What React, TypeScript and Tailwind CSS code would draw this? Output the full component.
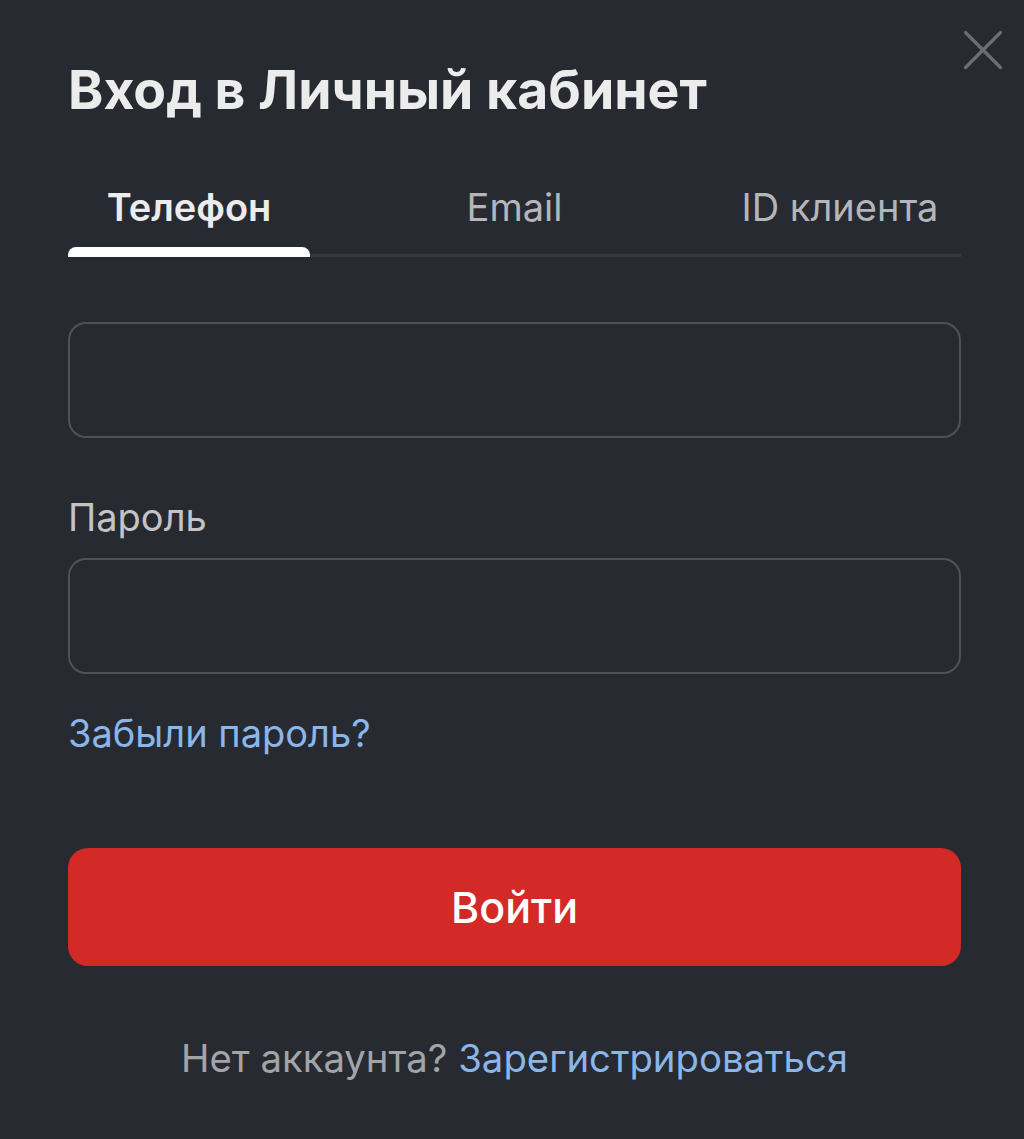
import { X } from "lucide-react";

const tabs = ["Телефон", "Email", "ID клиента"];

function LoginModal() {
	const active = 0;
	return (
		<div className="relative min-h-[1139px] w-full bg-[#272a31] pl-[68px] pr-[63px] pt-[58px] font-['Inter',sans-serif]">
			<button className="absolute right-[6px] top-[15px] text-[#6b6e74]">
				<X className="h-[70px] w-[70px]" strokeWidth={1.1} />
			</button>
			<h1 className="text-[53.5px] font-bold leading-[64px] text-[#ececec]">Вход в Личный кабинет</h1>

			<div className="relative mt-[62px]">
				<div className="flex justify-between">
					{tabs.map((tab, index) => (
						<button
							key={tab}
							className={`relative w-[242px] pb-[27px] text-[38px] leading-[46px] ${
								index === active ? "font-semibold text-[#ececec]" : "text-[#b4b6ba]"
							}`}
						>
							{tab}
							{index === active && (
								<span className="absolute bottom-0 left-0 z-10 h-[10px] w-full rounded-t-[8px] bg-white" />
							)}
						</button>
					))}
				</div>
				<div className="-mt-[3px] h-[3px] w-full bg-[#353841]" />
			</div>

			<div className="mt-[65px] h-[116px] rounded-[18px] border-2 border-[#4e525b]" />

			<p className="mt-[57px] text-[38px] leading-[44px] text-[#c4c4c6]">Пароль</p>
			<div className="mt-[19px] h-[116px] rounded-[18px] border-2 border-[#4e525b]" />

			<a className="mt-[37px] block text-[38px] leading-[44px] text-[#8ab6ea]">Забыли пароль?</a>

			<button className="mt-[93px] flex h-[118px] w-full items-center justify-center rounded-[20px] bg-[#d42a27] text-[43px] font-medium text-white">
				Войти
			</button>

			<p className="mt-[70px] text-center text-[38.3px] leading-[44px] text-[#a3a4a8]">
				Нет аккаунта? <a className="text-[#8ab6ea]">Зарегистрироваться</a>
			</p>
		</div>
	);
}

export default function App() {
	return <LoginModal />;
}
